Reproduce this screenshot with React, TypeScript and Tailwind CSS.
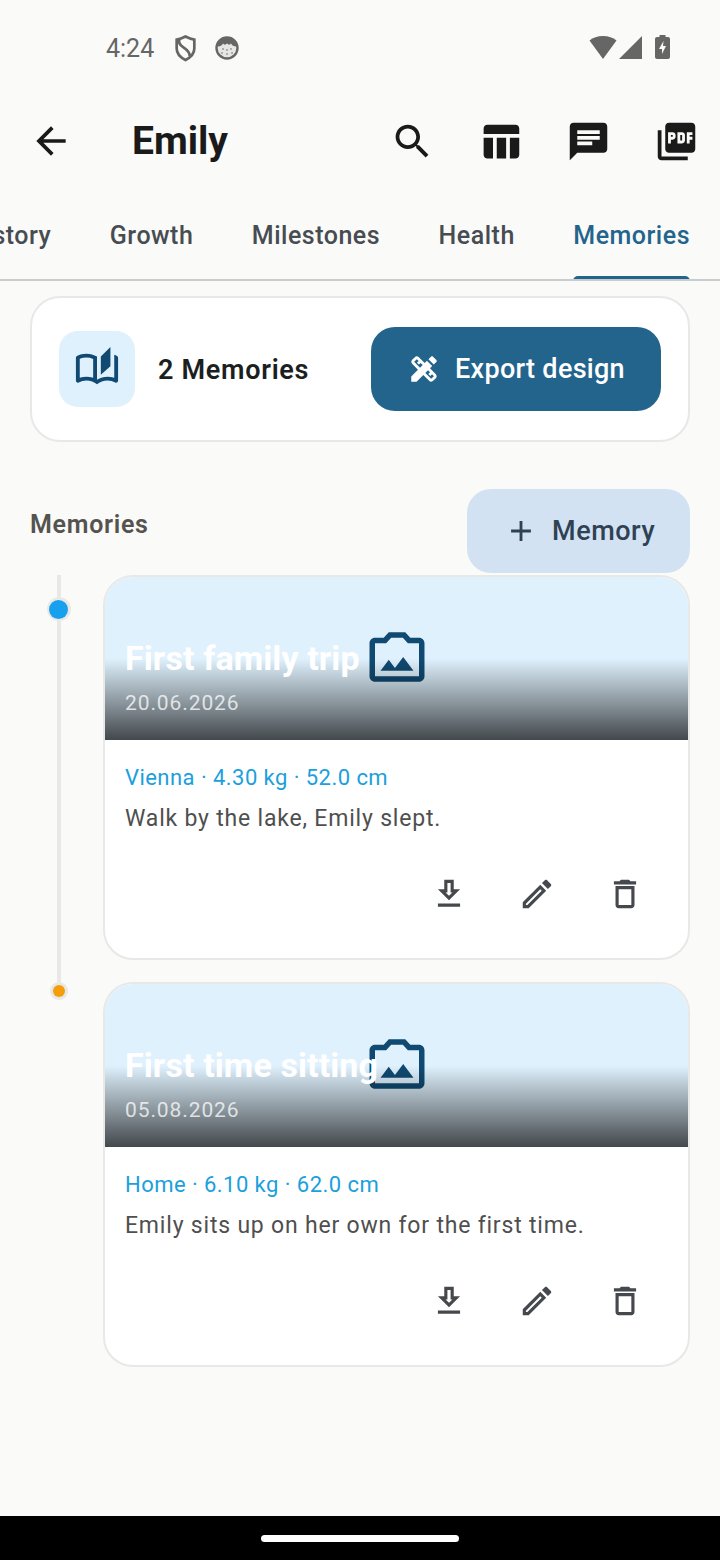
import type { ReactNode } from "react";

function MaterialIcon({ d, className }: { d: string; className?: string }) {
  return (
    <svg viewBox="0 0 24 24" fill="currentColor" className={className}>
      <path d={d} />
    </svg>
  );
}

const icons = {
  back: "M20 11H7.83l5.59-5.59L12 4l-8 8 8 8 1.41-1.41L7.83 13H20v-2z",
  search:
    "M15.5 14h-.79l-.28-.27C15.41 12.59 16 11.11 16 9.5 16 5.91 13.09 3 9.5 3S3 5.91 3 9.5 5.91 16 9.5 16c1.61 0 3.09-.59 4.23-1.57l.27.28v.79l5 4.99L20.49 19l-4.99-5zm-6 0C7.01 14 5 11.99 5 9.5S7.01 5 9.5 5 14 7.01 14 9.5 11.99 14 9.5 14z",
  table: "M10 10.02h5V21h-5zM17 21h3c1.1 0 2-.9 2-2v-9h-5v11zm3-18H5c-1.1 0-2 .9-2 2v3h19V5c0-1.1-.9-2-2-2zM3 19c0 1.1.9 2 2 2h3V10H3v9z",
  chat: "M20 2H4c-1.1 0-1.99.9-1.99 2L2 22l4-4h14c1.1 0 2-.9 2-2V4c0-1.1-.9-2-2-2zM6 9h12v2H6V9zm8 5H6v-2h8v2zm4-6H6V6h12v2z",
  pdf: "M20 2H8c-1.1 0-2 .9-2 2v12c0 1.1.9 2 2 2h12c1.1 0 2-.9 2-2V4c0-1.1-.9-2-2-2zm-8.5 7.5c0 .83-.67 1.5-1.5 1.5H9v2H7.5V7H10c.83 0 1.5.67 1.5 1.5v1zm5 2c0 .83-.67 1.5-1.5 1.5h-2.5V7H15c.83 0 1.5.67 1.5 1.5v3zm4-3H19v1h1.5V11H19v2h-1.5V7h3v1.5zM9 9.5h1v-1H9v1zM4 6H2v14c0 1.1.9 2 2 2h14v-2H4V6zm10 5.5h1v-3h-1v3z",
  stories:
    "M22.47 5.2C22 4.96 21.51 4.76 21 4.59v12.03C19.86 16.21 18.69 16 17.5 16c-1.9 0-3.78.54-5.5 1.58V5.48C10.38 4.55 8.51 4 6.5 4 4.71 4 3.02 4.44 1.53 5.2 1.2 5.36 1 5.71 1 6.08v12.08c0 .58.47.99 1 .99.16 0 .32-.04.48-.12C3.69 18.4 5.05 18 6.5 18c2.07 0 3.98.82 5.5 2 1.52-1.18 3.43-2 5.5-2 1.45 0 2.81.4 4.02 1.04.16.08.32.12.48.12.52 0 1-.41 1-.99V6.08c0-.37-.2-.72-.53-.88zM10 16.62C8.86 16.21 7.69 16 6.5 16c-1.19 0-2.36.21-3.5.62V6.71C4.11 6.24 5.28 6 6.5 6c1.2 0 2.39.25 3.5.72v9.9zM19 .5l-5 5V15l5-4.5V.5z",
  design:
    "M16.24 11.51l1.57-1.57-3.75-3.75-1.57 1.57-4.14-4.13c-.78-.78-2.05-.78-2.83 0l-1.9 1.9c-.78.78-.78 2.05 0 2.83l4.13 4.13L3 17.25V21h3.75l4.76-4.76 4.13 4.13c.95.95 2.23.6 2.83 0l1.9-1.9c.78-.78.78-2.05 0-2.83l-4.13-4.13zm-7.06-.44L5.04 6.94l1.89-1.9L8.2 6.31 7.02 7.5l1.41 1.41 1.19-1.19 1.45 1.45-1.89 1.9zm7.88 7.89l-4.13-4.13 1.9-1.9 1.45 1.45-1.19 1.19 1.41 1.41 1.19-1.19 1.27 1.27-1.9 1.9zM20.71 7.04c.39-.39.39-1.02 0-1.41l-2.34-2.34c-.47-.47-1.12-.29-1.41 0l-1.83 1.83 3.75 3.75 1.83-1.83z",
  add: "M19 13h-6v6h-2v-6H5v-2h6V5h2v6h6v2z",
  camera:
    "M20 5h-3.17L15 3H9L7.17 5H4c-1.1 0-2 .9-2 2v12c0 1.1.9 2 2 2h16c1.1 0 2-.9 2-2V7c0-1.1-.9-2-2-2zm0 14H4V7h4.05l1.83-2h4.24l1.83 2H20v12zM6 17h12l-3.75-5-3 4L9 13l-3 4z",
  download: "M19 9h-4V3H9v6H5l7 7 7-7zm-8 2V5h2v6h1.17L12 13.17 9.83 11H11zm-6 7h14v2H5z",
  edit: "M14.06 9.02l.92.92L5.92 19H5v-.92l9.06-9.06M17.66 3c-.25 0-.51.1-.7.29l-1.83 1.83 3.75 3.75 1.83-1.83c.39-.39.39-1.02 0-1.41l-2.34-2.34c-.2-.2-.45-.29-.71-.29zm-3.6 3.19L3 17.25V21h3.75L17.81 9.94l-3.75-3.75z",
  trash: "M6 19c0 1.1.9 2 2 2h8c1.1 0 2-.9 2-2V7H6v12zM8 9h8v10H8V9zm7.5-5l-1-1h-5l-1 1H5v2h14V4z",
};

function StatusBar() {
  return (
    <div className="flex h-[96px] items-center pl-[106px] pr-[50px] text-[#666666]">
      <span className="text-[25px] leading-none">4:24</span>
      <svg viewBox="0 0 22 26" className="ml-[20px] h-[27px] w-[23px]" fill="none" stroke="currentColor" strokeWidth="2.6">
        <path d="M11 1.500c3 1.500 5.500 2.500 8.500 3v8.500c0 5-3.600 8.600-8.500 11C6.100 21.600 2.500 18 2.500 13V4.500c3-.5 5.500-1.500 8.500-3z" />
        <path d="M5 4.500c-1 3 1 5.500 4 7.500s6.500 4.500 6 8.500" />
      </svg>
      <svg viewBox="0 0 24 24" className="ml-[18px] h-[24px] w-[24px]">
        <circle cx="12" cy="12" r="10.500" fill="#e6e6e4" stroke="currentColor" strokeWidth="2.400" />
        <path d="M2.500 10.500C3.500 4 8 1.500 12 1.500s8.500 2.500 9.500 9c-3 0-4.500-1-5.500-3-1 1.500-2.500 1.500-4 0-1.500 1.500-3 1.500-4 0-1 2-2.500 3-5.500 3z" fill="currentColor" />
        <circle cx="8" cy="13" r=".8" fill="currentColor" />
        <circle cx="16" cy="13" r=".8" fill="currentColor" />
        <circle cx="12" cy="14" r=".8" fill="currentColor" />
        <circle cx="7" cy="17" r=".8" fill="currentColor" />
        <circle cx="12" cy="18" r=".8" fill="currentColor" />
        <circle cx="17" cy="17" r=".8" fill="currentColor" />
      </svg>
      <div className="mb-[2px] ml-auto flex items-center">
        <svg viewBox="0 0 28 23" className="h-[23px] w-[28px]" fill="currentColor">
          <path d="M14 23L0.500 4.500C4 1.500 8.500 0 14 0s10 1.500 13.500 4.500z" />
        </svg>
        <svg viewBox="0 0 23 23" className="ml-[2px] h-[23px] w-[23px]" fill="currentColor">
          <path d="M23 0v23H0z" />
        </svg>
        <svg viewBox="0 0 15 24" className="ml-[13px] h-[24px] w-[15px]" fill="currentColor">
          <path
            fillRule="evenodd"
            d="M4.500 0h6v2H13c1 0 2 .8 2 2v18c0 1.200-1 2-2 2H2c-1 0-2-.8-2-2V4c0-1.200 1-2 2-2h2.500zM8.500 6L4 14h3v5l4-8H8z"
          />
        </svg>
      </div>
    </div>
  );
}

function AppBar() {
  return (
    <div className="flex h-[90px] items-center text-[#1a1a1a]">
      <MaterialIcon d={icons.back} className="ml-[29px] h-[44px] w-[44px]" />
      <h1 className="ml-[59px] text-[39px] font-bold leading-none">Emily</h1>
      <div className="ml-auto flex items-center gap-[43px] pr-[21px]">
        <MaterialIcon d={icons.search} className="h-[45px] w-[45px]" />
        <MaterialIcon d={icons.table} className="h-[45px] w-[45px]" />
        <MaterialIcon d={icons.chat} className="h-[45px] w-[45px]" />
        <MaterialIcon d={icons.pdf} className="h-[45px] w-[45px]" />
      </div>
    </div>
  );
}

function Tabs() {
  const tabs = ["History", "Growth", "Milestones", "Health", "Memories"];
  return (
    <div className="mt-[7px] flex h-[88px] justify-end gap-[58.5px] overflow-hidden whitespace-nowrap border-b-2 border-[#c9cccd] pr-[30px]">
      {tabs.map((tab) => (
        <div
          key={tab}
          className={`relative flex h-[88px] items-center pb-[2px] text-[25px] font-medium tracking-[0.5px] ${
            tab === "Memories" ? "text-[#23648c]" : "text-[#474c52]"
          }`}
        >
          {tab}
          {tab === "Memories" && (
            <div className="absolute bottom-[0px] left-0 right-0 h-[5px] rounded-t-[5px] bg-[#23648c]" />
          )}
        </div>
      ))}
    </div>
  );
}

function SummaryCard() {
  return (
    <div className="mx-[30px] mt-[15px] flex h-[146px] items-center rounded-[30px] border-2 border-[#e8e8e6] bg-white pl-[27px] pr-[27px]">
      <div className="flex h-[76px] w-[76px] items-center justify-center rounded-[19px] bg-[#dff1fd] text-[#104a72]">
        <MaterialIcon d={icons.stories} className="h-[46px] w-[46px]" />
      </div>
      <span className="ml-[23px] mt-[2px] text-[27px] font-semibold tracking-[0.7px] text-[#1c1f22]">2 Memories</span>
      <button className="ml-auto flex h-[84px] w-[290px] items-center justify-center gap-[14px] rounded-[24px] bg-[#23648c] text-[27px] font-medium tracking-[0.3px] text-white">
        <MaterialIcon d={icons.design} className="h-[34px] w-[34px]" />
        Export design
      </button>
    </div>
  );
}

function Rail({ first, dot }: { first: boolean; dot: string }) {
  return (
    <div className="flex w-[57px] shrink-0 flex-col items-center">
      {first ? (
        <>
          <div className="h-[22px] w-[4px] bg-[#e8e8e6]" />
          <div className="flex h-[24px] w-[24px] items-center justify-center rounded-full bg-[#e8e8e6]">
            <div className={`h-[19px] w-[19px] rounded-full ${dot}`} />
          </div>
          <div className="w-[4px] flex-1 bg-[#e8e8e6]" />
        </>
      ) : (
        <div className="flex h-[18px] w-[18px] items-center justify-center rounded-full bg-[#e8e8e6]">
          <div className={`h-[12px] w-[12px] rounded-full ${dot}`} />
        </div>
      )}
    </div>
  );
}

function IconSlot({ children }: { children: ReactNode }) {
  return <div className="flex w-[88px] justify-center text-[#45494e]">{children}</div>;
}

function MemoryCard({ title, date, meta, text, first, dot }: { title: string; date: string; meta: string; text: string; first: boolean; dot: string }) {
  return (
    <div className="flex pl-[30px]">
      <Rail first={first} dot={dot} />
      <div className={`ml-[16px] w-[587px] ${first ? "pb-[22px]" : ""}`}>
        <div className="h-[385px] overflow-hidden rounded-[30px] border-2 border-[#e8e8e6] bg-white">
          <div className="relative flex h-[163px] items-center justify-center bg-[#dff1fd] pb-[4px] text-[#104a72]">
            <MaterialIcon d={icons.camera} className="h-[66px] w-[66px]" />
            <div className="absolute inset-0 bg-[linear-gradient(180deg,rgba(0,0,0,0)_50%,rgba(0,0,0,0.7)_100%)]" />
            <div className="absolute left-[20px] top-[61px]">
              <div className="text-[34px] font-bold leading-[40px] tracking-[0.1px] text-white">{title}</div>
              <div className="mt-[13px] text-[21px] leading-[25px] tracking-[0.9px] text-white/75">{date}</div>
            </div>
          </div>
          <div className="px-[20px] pt-[25px]">
            <div className="text-[22px] leading-[26px] tracking-[0.45px] text-[#1aa0dc]">{meta}</div>
            <div className="mt-[14px] text-[23px] leading-[28px] tracking-[0.8px] text-[#4f4f4f]">{text}</div>
          </div>
          <div className="mt-[42px] flex justify-end pr-[19px]">
            <IconSlot>
              <MaterialIcon d={icons.download} className="h-[38px] w-[38px]" />
            </IconSlot>
            <IconSlot>
              <MaterialIcon d={icons.edit} className="h-[38px] w-[38px]" />
            </IconSlot>
            <IconSlot>
              <MaterialIcon d={icons.trash} className="h-[38px] w-[38px]" />
            </IconSlot>
          </div>
        </div>
      </div>
    </div>
  );
}

export default function App() {
  return (
    <div className="flex h-[1560px] w-[720px] flex-col overflow-hidden bg-[#fafaf8] font-['Roboto',sans-serif]">
      <StatusBar />
      <AppBar />
      <Tabs />
      <SummaryCard />
      <div className="mt-[47px] flex items-start justify-between pl-[30px] pr-[30px]">
        <span className="mt-[19px] text-[25px] font-semibold leading-[34px] tracking-[0.7px] text-[#55534f]">Memories</span>
        <button className="flex h-[84px] w-[223px] items-center gap-[14px] rounded-[24px] bg-[#d2e2f3] pl-[37px] text-[27px] font-medium tracking-[0.55px] text-[#2f4254]">
          <MaterialIcon d={icons.add} className="h-[34px] w-[34px]" />
          Memory
        </button>
      </div>
      <div className="mt-[2px]">
        <MemoryCard
          first
          dot="bg-[#17a0ee]"
          title="First family trip"
          date="20.06.2026"
          meta="Vienna · 4.30 kg · 52.0 cm"
          text="Walk by the lake, Emily slept."
        />
        <MemoryCard
          first={false}
          dot="bg-[#f59e0b]"
          title="First time sitting"
          date="05.08.2026"
          meta="Home · 6.10 kg · 62.0 cm"
          text="Emily sits up on her own for the first time."
        />
      </div>
      <div className="mt-auto flex h-[44px] items-center justify-center bg-black">
        <div className="h-[7px] w-[198px] rounded-full bg-white" />
      </div>
    </div>
  );
}
